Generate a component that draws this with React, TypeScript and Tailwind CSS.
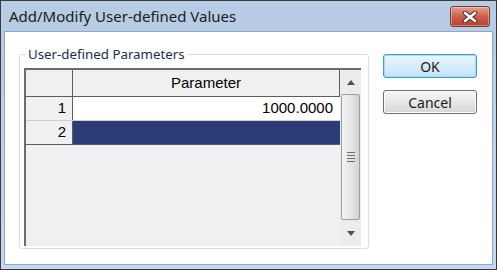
const ui = { fontFamily: '"Noto Sans", "Open Sans", sans-serif' };
const grid = { fontFamily: '"Liberation Sans", Arial, sans-serif' };

function CloseButton() {
  return (
    <div className="flex h-[21px] w-[40px] items-center justify-center rounded-[3px] border border-[#7a3b33] bg-gradient-to-b from-[#e0a192] via-[#c9604d] to-[#b8412d] shadow-[inset_0_0_0_1px_rgba(255,255,255,0.35)]">
      <svg width="16" height="12" viewBox="0 0 16 12">
        <path
          d="M3 2 L13 10 M13 2 L3 10"
          stroke="#4a2a26"
          strokeWidth="4.5"
          strokeLinecap="round"
        />
        <path
          d="M3 2 L13 10 M13 2 L3 10"
          stroke="#ffffff"
          strokeWidth="2.6"
          strokeLinecap="round"
        />
      </svg>
    </div>
  );
}

function DialogButton({ label, focused }: { label: string; focused?: boolean }) {
  return (
    <button
      type="button"
      className={
        focused
          ? "h-[24px] w-[94px] rounded-[3px] border border-[#3c9fd8] bg-gradient-to-b from-[#eaf6fd] to-[#c4e3f6] text-[14px] text-[#1a1a1a] shadow-[inset_0_0_0_1px_#a8dcf7]"
          : "h-[24px] w-[94px] rounded-[3px] border border-[#707070] bg-gradient-to-b from-[#f6f6f6] via-[#e8e8e8] to-[#d6d6d6] text-[14px] text-[#1a1a1a] shadow-[inset_0_0_0_1px_#fcfcfc]"
      }
      style={ui}
    >
      {label}
    </button>
  );
}

function Arrow({ up }: { up?: boolean }) {
  return (
    <svg width="8" height="5" viewBox="0 0 8 5">
      <path d={up ? "M0 5 L4 0 L8 5 Z" : "M0 0 L8 0 L4 5 Z"} fill="#505050" />
    </svg>
  );
}

function ScrollBar() {
  return (
    <div className="flex w-[21px] flex-col bg-[#ececec]">
      <div className="flex h-[24px] items-center justify-center">
        <Arrow up />
      </div>
      <div className="mx-[1px] flex h-[126px] items-center justify-center rounded-[2px] border border-[#9d9d9d] bg-gradient-to-r from-[#f4f4f4] via-[#e6e6e6] to-[#d3d3d3]">
        <div className="flex flex-col gap-[2px]">
          <div className="h-[1px] w-[8px] bg-[#6f6f6f]" />
          <div className="h-[1px] w-[8px] bg-[#6f6f6f]" />
          <div className="h-[1px] w-[8px] bg-[#6f6f6f]" />
          <div className="h-[1px] w-[8px] bg-[#6f6f6f]" />
        </div>
      </div>
      <div className="flex flex-1 items-center justify-center">
        <Arrow />
      </div>
    </div>
  );
}

export default function App() {
  return (
    <div className="h-[270px] w-[497px] bg-[#3b3b3b] p-[1px]">
      <div className="flex h-full w-full flex-col bg-gradient-to-b from-[#b6cbe4] to-[#c5d8ec] px-[3px] pb-[4px]">
        {/* 타이틀 바 */}
        <div className="flex h-[30px] shrink-0 items-center justify-between pl-[5px] pr-[3px] pt-[1px]">
          <span className="text-[15px] text-[#1b1b1b]" style={ui}>
            Add/Modify User-defined Values
          </span>
          <CloseButton />
        </div>

        {/* 클라이언트 영역 */}
        <div className="flex flex-1 gap-[14px] border border-[#8ea8c6] bg-white pl-[14px] pt-[14px]">
          <fieldset className="h-[203px] w-[350px] rounded-[3px] border border-[#d5dfe5] px-[4px] pb-[2px]">
            <legend className="ml-[2px] px-[2px] text-[13.3px] leading-[16px] text-[#1e2b4d]" style={ui}>
              User-defined Parameters
            </legend>
            <div className="mt-[6px] flex h-[178px] w-[337px] border-l-2 border-t-2 border-[#6b6b6b] bg-[#f0f0f2]" style={grid}>
              <div className="flex flex-1 flex-col">
                <div className="flex h-[27px] border-b border-[#5e5e5e]">
                  <div className="w-[47px] border-r border-[#5e5e5e] bg-[#f0f0f0]" />
                  <div className="flex flex-1 items-center justify-center border-r border-[#5e5e5e] bg-[#f0f0f0] text-[15px] text-black">
                    Parameter
                  </div>
                </div>
                <div className="flex h-[24px] border-b border-[#cfcfcf]">
                  <div className="flex w-[47px] items-center justify-end border-r border-[#5e5e5e] bg-[#f0f0f0] pr-[6px] text-[15px] text-black">
                    1
                  </div>
                  <div className="flex flex-1 items-center justify-end bg-white pr-[7px] text-[15px] text-black">
                    1000.0000
                  </div>
                </div>
                <div className="flex h-[24px] border-b border-[#5e5e5e]">
                  <div className="flex w-[47px] items-center justify-end border-r border-[#5e5e5e] bg-[#f0f0f0] pr-[6px] text-[15px] text-black">
                    2
                  </div>
                  <div className="flex-1 bg-[#2c3c77]" />
                </div>
              </div>
              <ScrollBar />
            </div>
          </fieldset>
          <div className="flex flex-col gap-[12px] pt-[8px]">
            <DialogButton label="OK" focused />
            <DialogButton label="Cancel" />
          </div>
        </div>
      </div>
    </div>
  );
}
